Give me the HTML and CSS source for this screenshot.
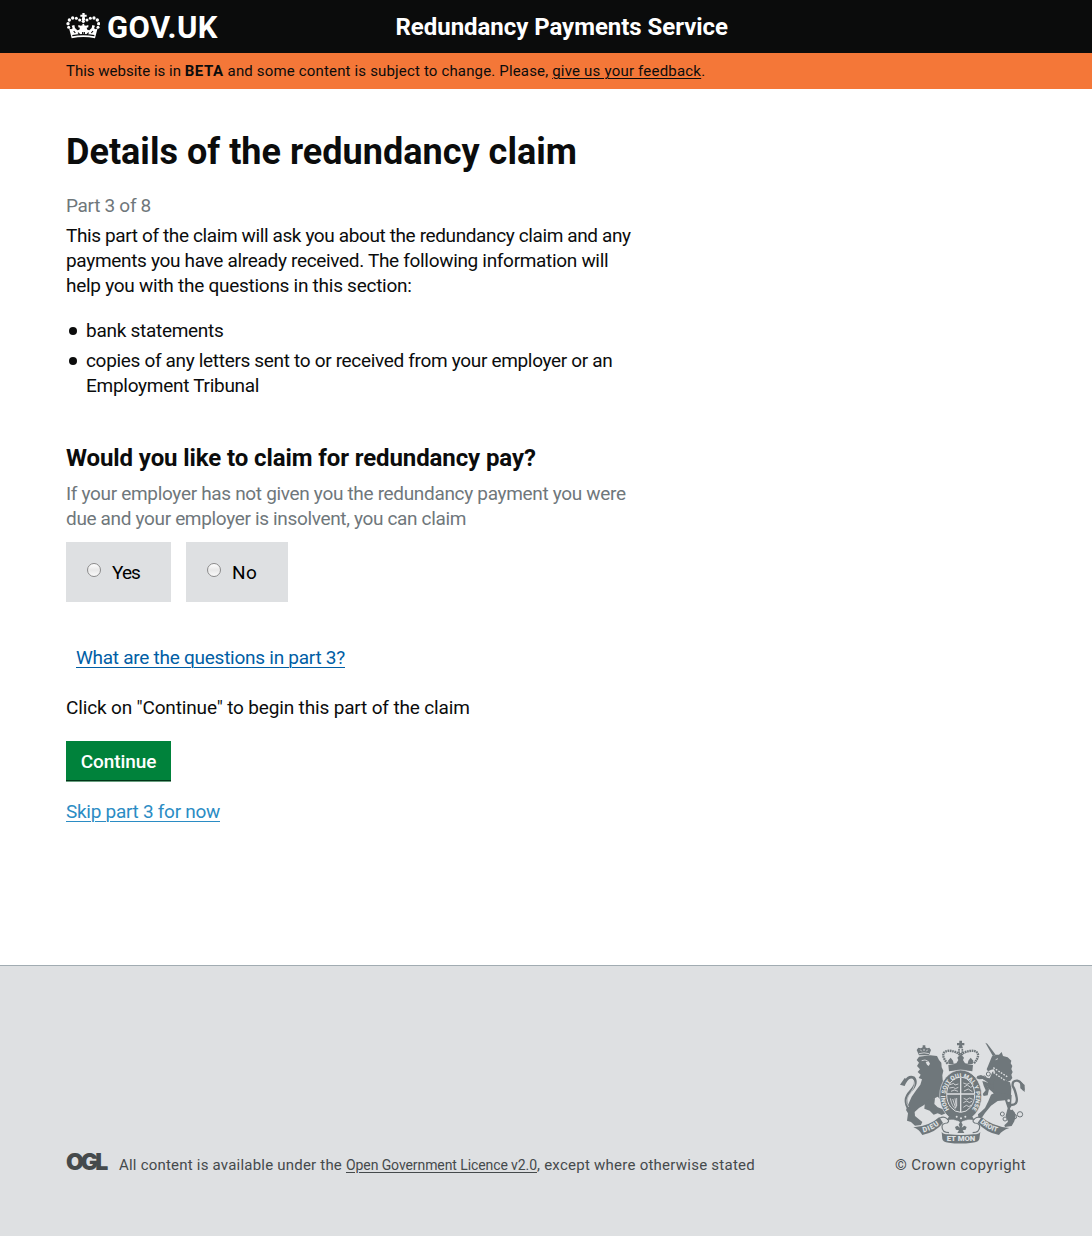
FILE: index.html
```html
<!DOCTYPE html>
<html lang="en">
<head>
<meta charset="utf-8">
<title>Details of the redundancy claim</title>
<link rel="stylesheet" href="styles.css">
</head>
<body>
<header class="header">
  <div class="wrap header-row">
    <a class="logo" href="#">
      <svg class="crown" viewBox="30 36 102 84" aria-hidden="true">
        <g fill="#fff">
          <path d="M79 39h7v5h6v6h-6l2 10h-11l2-10h-6v-6h6z"/>
          <circle cx="82" cy="64" r="5"/><circle cx="82" cy="74" r="3"/>
          <circle cx="71" cy="60" r="4.500"/><circle cx="61" cy="55" r="4.500"/><circle cx="50" cy="54" r="5"/><circle cx="40" cy="60" r="5"/><circle cx="36" cy="71" r="5"/><circle cx="38" cy="82" r="4.500"/>
          <circle cx="93" cy="60" r="4.500"/><circle cx="103" cy="55" r="4.500"/><circle cx="114" cy="54" r="5"/><circle cx="124" cy="60" r="5"/><circle cx="128" cy="71" r="5"/><circle cx="126" cy="82" r="4.500"/>
          <path d="M39 84c5 5 8 4 11 1l-3-8 8-2 2 9 7 7 6-2 2-6-5-1v-7l7 2 8-2 8 2 7-2v7l-5 1 2 6 6 2 7-7 2-9 8 2-3 8c3 3 6 4 11-1l-8 31c-24-5-46-5-70 0z"/>
        </g>
        <path d="M49 107c22-4 44-4 66 0M53 93l5 6M66 98l5 5M80 96v6M85 96v6M98 98l-5 5M111 93l-5 6" fill="none" stroke="#0b0c0c" stroke-width="3.500"/>
      </svg>
      <span class="t logo-text">GOV.UK</span>
    </a>
    <a class="service" href="#"><span class="t t-service">Redundancy Payments Service</span></a>
  </div>
</header>
<div class="beta">
  <p class="wrap"><span class="t">This website is in </span><strong class="t t-b2">BETA</strong><span class="t t-b3"> and some content is subject to change. Please, </span><a class="t t-b4" href="#">give us your feedback</a>.</p>
</div>
<main class="wrap main">
  <h1><span class="t">Details of the redundancy claim</span></h1>
  <p class="part"><span class="t t-part">Part 3 of 8</span></p>
  <p class="intro"><span class="t t-i1">This part of the claim will ask you about the redundancy claim and any</span><br><span class="t t-i2">payments you have already received. The following information will</span><br><span class="t t-i3">help you with the questions in this section:</span></p>
  <ul class="list">
    <li><span class="t t-l1">bank statements</span></li>
    <li><span class="t t-l2">copies of any letters sent to or received from your employer or an</span><br><span class="t t-l3">Employment Tribunal</span></li>
  </ul>
  <form>
    <h2><span class="t t-h2">Would you like to claim for redundancy pay?</span></h2>
    <p class="hint"><span class="t t-n1">If your employer has not given you the redundancy payment you were</span><br><span class="t t-n2">due and your employer is insolvent, you can claim</span></p>
    <div class="choices">
      <label class="choice yes"><input class="radio" type="radio" name="claim"><span class="t t-yes">Yes</span></label>
      <label class="choice no"><input class="radio" type="radio" name="claim"><span class="t t-no">No</span></label>
    </div>
    <a class="details" href="#"><span class="t t-q">What are the questions in part 3?</span></a>
    <p class="click"><span class="t t-click">Click on "Continue" to begin this part of the claim</span></p>
    <button class="button" type="button"><span class="t t-btn">Continue</span></button>
    <a class="skip" href="#"><span class="t t-skip">Skip part 3 for now</span></a>
  </form>
</main>
<footer class="footer">
  <div class="wrap footer-row">
    <div class="licence">
      <span class="t ogl">OGL</span>
      <p><span class="t t-f1">All content is available under the </span><a class="t t-f2" href="#">Open Government Licence v2.0</a><span class="t t-f3">, except where otherwise stated</span></p>
    </div>
    <a class="copyright" href="#">
      <svg class="arms" viewBox="30 30 381 312" aria-hidden="true">
        <defs>
          <path id="garter" d="M181 238A46 57 0 1 1 249 238"/>
          <path id="dieu" d="M103 307Q133 301 157 279"/>
          <path id="droit" d="M272 277Q297 301 328 307"/>
        </defs>
        <!-- lion -->
        <g fill="#6f777b">
          <path d="M90 76L83 60L88 53L96 55L101 52L101 46H109L109 52L114 55L121 53L126 60L120 76z"/>
          <path d="M90 80L124 76L144 78L150 90L157 98L158 112L163 122L160 136L161 150L166 165L162 184L168 206L158 212L146 200L134 206L120 214L104 226L90 234L77 246L78 258L88 266L100 276L96 285L78 287L66 276L54 272L57 250L51 240L60 218L68 200L82 180L94 164L99 148L89 144L95 134L86 126L93 118L84 108L90 98L83 90z"/>
          <path d="M108 212L138 204L136 222L146 232L162 238L170 250L158 255L146 250L134 254L122 242L106 236z"/>
        </g>
        <!-- unicorn -->
        <g fill="#6f777b">
          <path d="M289 38l6 3 25 33-8 5z"/>
          <path d="M309 79l12-5 9 0 8-8 4 12 14 4 11 10-2 8 5 8-3 9 4 9-4 8 3 10-6 8-8 2-36-22-5-14-8 1-10 5-4-6 5-12z"/>
          <path d="M311 124l44 29 8 4 4 18-1 20-12 10-30-4-14-15-13-11-2-14z"/>
          <path d="M322 186l-16 8-8 20-10 20-12 11-9 8 1 9 12-1 8-12 18-22 20-14 22-2 8 24-6 22 7 18-11 11 2 5 20-3 8-14 4-16-2-10-12-15 2-38z"/>
          <path d="M316 148l-22-5-18-8-11 3-3 7 8 3 12-1 16 12 14 6z"/>
          <path d="M312 165l-23-10-9-2 4 14 6 14-9 11 3 6 12-2 4-18-4-9 18 8z"/>
        </g>
        <!-- royal crown -->
        <g fill="#6f777b">
          <path d="M211 32h8v7h7v7h-7l3 9h-14l3-9h-7v-7h7z"/>
          <path d="M178 105q37-9 74 0l-2 19q-34-7-70 0z"/>
          <path d="M179 102l-2-10 8-9 7 9 2 9 8-1 6-10-3-7 10-11 10 11-3 7 6 10 8 1 2-9 7-9 8 9-2 10z"/>
        </g>
        <g fill="none" stroke="#6f777b">
          <path d="M176 101C142 63 180 51 214 74C250 51 288 63 254 101" stroke-width="7" stroke-dasharray="5 2"/>
          <path d="M210 57v20M220 57v20" stroke-width="5" stroke-dasharray="5 2"/>
          <path d="M60 238Q40 209 64 184T74 143Q59 137 49 155L40 163" stroke-width="8"/>
          <path d="M365 225q22 1 18-22t-12-35q-2-17 14-16 14 3 19 28" stroke-width="7"/>
        </g>
        <path d="M33 164l14-20 8 5-8 19zM393 153l14 12v21l-13-11z" fill="#6f777b"/>
        <path d="M59 231Q45 212 65 188Q82 165 73 150" fill="none" stroke="#dee0e2" stroke-width="2"/>
        <path d="M90 71q15-5 30 0M94 59l4 5M105 57v6M116 59l-4 5M98 92l10-2 8 3" fill="none" stroke="#dee0e2" stroke-width="2.500"/>
        <path d="M110 96l9-2 4 7-4 7-5-4z" fill="#dee0e2"/>
        <path d="M306 122l44 31M313 113l43 28" fill="none" stroke="#dee0e2" stroke-width="4" stroke-dasharray="5 4"/>
        <path d="M320 89l7-3" fill="none" stroke="#dee0e2" stroke-width="2.500"/>
        <g fill="none" stroke="#6f777b" stroke-width="3">
          <circle cx="298" cy="132" r="6"/><circle cx="286" cy="143" r="5"/><circle cx="340" cy="252" r="6"/><circle cx="348" cy="267" r="6"/><circle cx="376" cy="260" r="7"/><circle cx="393" cy="253" r="8"/>
        </g>
        <circle cx="359" cy="212" r="4" fill="#dee0e2"/><circle cx="367" cy="236" r="4" fill="#dee0e2"/>
        <!-- garter and quartered shield -->
        <ellipse cx="215" cy="197" rx="63" ry="77" fill="#6f777b" stroke="#dee0e2" stroke-width="2"/>
        <ellipse cx="215" cy="194" rx="42" ry="53" fill="none" stroke="#dee0e2" stroke-width="3"/>
        <path d="M215 143v104M174 192h82" stroke="#dee0e2" stroke-width="4"/>
        <path d="M183 164l11-4 4 5 10-3M181 174l12-2 6 4 9-4M186 184l10-4 11 4M223 159l11 4 8-4M225 171l10-6 10 7 7-4M225 183l13-6 12 8M184 205q5 26 16 32M191 207l9 27M198 205l4 27M203 204v24M224 205l9 4 9-5 9 4M223 218l10-5 8 5 9-5M223 232l9-6 8 4 7-6" fill="none" stroke="#dee0e2" stroke-width="2.500"/>
        <text class="motto" font-size="18"><textPath href="#garter" textLength="244" lengthAdjust="spacingAndGlyphs">HONI SOIT QUI MAL Y PENSE</textPath></text>
        <path d="M182 255q33 20 65 0l9 15-28-2-13 10-13-10-28 2z" fill="#6f777b"/>
        <circle cx="203" cy="260" r="3" fill="#dee0e2"/><circle cx="216" cy="265" r="3" fill="#dee0e2"/><circle cx="229" cy="260" r="3" fill="#dee0e2"/>
        <!-- motto scroll -->
        <g fill="#6f777b">
          <path d="M73 292q48-3 78-31l11 18q-22 28-62 36-9-16-27-23z"/>
          <path d="M361 294q-52-5-83-33l-12 17q24 29 64 37 9-14 31-21z"/>
          <path d="M158 305q4 8 20 8 38 4 76 0 16 0 20-8l-3 22q-1 9-22 11-36 5-70 0-18-2-19-11z"/>
        </g>
        <path d="M153 264q11-6 21 2 10 7 0 13-15 1-15 11 0 17 21 18M278 264q-11-6-21 2-10 7 0 13 15 1 15 11 0 17-21 18" fill="none" stroke="#6f777b" stroke-width="3.500"/>
        <path d="M213 276l4 0 4 8-3 9 8-6 7 4-3 8-9 2 5 8h-21l5-8-9-2-3-8 7-4 8 6-4-9z" fill="#6f777b"/>
        <text class="motto" font-size="22"><textPath href="#dieu" textLength="54">DIEU</textPath></text>
        <text class="motto" font-size="21"><textPath href="#droit" textLength="60">DROIT</textPath></text>
        <text class="motto" x="173" y="334" font-size="22" textLength="86" lengthAdjust="spacingAndGlyphs">ET MON</text>
      </svg>
      <span class="t t-copy">© Crown copyright</span>
    </a>
  </div>
</footer>
</body>
</html>
```
FILE: styles.css
```css
* { box-sizing: border-box; }
body { margin: 0; background: #fff; color: #0b0c0c; font: 19px/25px Roboto, "Liberation Sans", sans-serif; }
h1, h2, p, ul { margin: 0; padding: 0; }
.t { white-space: pre; }
.wrap { width: 960px; margin: 0 auto; }

.header { height: 53px; background: #0b0c0c; }
.header a { color: #fff; text-decoration: none; }
.header-row { display: flex; height: 53px; }
.logo { display: flex; width: 329.500px; font-size: 31px; font-weight: 700; line-height: 55px; letter-spacing: .45px; }
.crown { width: 34px; height: 28px; margin: 12px 7px 0 0; }
.service { font-size: 24px; font-weight: 700; line-height: 54px; letter-spacing: -.04px; }

.beta { height: 36px; background: #f47738; font-size: 15px; line-height: 36px; }
.beta a { color: #0b0c0c; text-underline-offset: 2px; text-decoration-thickness: 1px; }
.t-b2 { letter-spacing: .56px; }
.t-b3 { letter-spacing: .161px; }
.t-b4 { letter-spacing: .204px; }

.main { height: 876px; padding-top: 43px; }
h1 { font-size: 36px; line-height: 40px; letter-spacing: .02px; }
.part { margin-top: 21px; color: #6f777b; }
.intro { margin-top: 5px; }
.list { margin-top: 20px; padding-left: 20px; list-style: none; }
.list li { display: block; margin-bottom: 5px; }
.list li::before { content: ""; float: left; width: 8px; height: 8px; margin: 9px 0 0 -17px; border-radius: 50%; background: #0b0c0c; }
h2 { margin-top: 45px; font-size: 24px; line-height: 30px; }
.hint { margin-top: 8px; color: #6f777b; }
.t-part { letter-spacing: -.3px; }
.t-i1 { letter-spacing: -.382px; }
.t-i2 { letter-spacing: -.32px; }
.t-i3 { letter-spacing: -.265px; }
.t-l1 { letter-spacing: -.28px; }
.t-l2 { letter-spacing: -.325px; }
.t-l3 { letter-spacing: -.28px; }
.t-h2 { letter-spacing: -.1px; }
.t-n1 { letter-spacing: -.322px; }
.t-n2 { letter-spacing: -.34px; }
.t-yes { letter-spacing: -.9px; }
.t-no { letter-spacing: .5px; }
.t-q { letter-spacing: -.261px; }
.t-click { letter-spacing: -.155px; }
.t-btn { letter-spacing: -.096px; }
.t-skip { letter-spacing: -.281px; }

.choices { display: flex; gap: 15px; margin-top: 11px; }
.choice { display: flex; height: 60px; padding: 18px 0 0 21px; background: #dee0e2; color: #000; }
.yes { width: 105px; }
.no { width: 102px; }
.radio { appearance: none; width: 14px; height: 14px; margin: 3px 11px 0 0; border: 1px solid #8b8b8b; border-radius: 50%; background: linear-gradient(#fff, #e8e8e8 50%, #fafafa); }
.details { display: block; margin: 43px 0 0 10px; color: #005ea5; }
.details, .skip { text-decoration-thickness: 1px; text-underline-offset: 3px; }
.click { margin-top: 25px; }
.button { display: block; width: 105px; height: 40px; margin-top: 21px; padding: 1px 0 0; border: 0; background: #00823b; box-shadow: inset 0 -1px #003618, 0 1px #6a9f80; color: #fff; font: 500 19px/39px Roboto, "Liberation Sans", sans-serif; }
.skip { display: block; margin-top: 18px; color: #2b8cc4; }

.footer { height: 271px; border-top: 1px solid #a1acb2; background: #dee0e2; color: #454a4c; font-size: 15px; line-height: 20px; }
.footer a { color: #454a4c; text-decoration-thickness: 1px; text-underline-offset: 2px; }
.footer-row { display: flex; justify-content: space-between; padding-top: 74px; }
.licence { display: flex; padding-top: 115px; }
.ogl { width: 53px; margin-top: -3px; font: 900 23px/20px Inter, "Liberation Sans", sans-serif; letter-spacing: -3px; }
.t-f1 { letter-spacing: .212px; }
.t-f2 { font-size: 14px; letter-spacing: -.089px; }
.t-f3 { letter-spacing: .251px; }
.t-copy { letter-spacing: .399px; }
.copyright { display: flex; flex-direction: column; align-items: flex-end; }
.footer .copyright { text-decoration: none; }
.arms { width: 127px; height: 104px; margin-bottom: 11px; }
.motto { fill: #dee0e2; font-family: Roboto, sans-serif; font-weight: 900; }
```
